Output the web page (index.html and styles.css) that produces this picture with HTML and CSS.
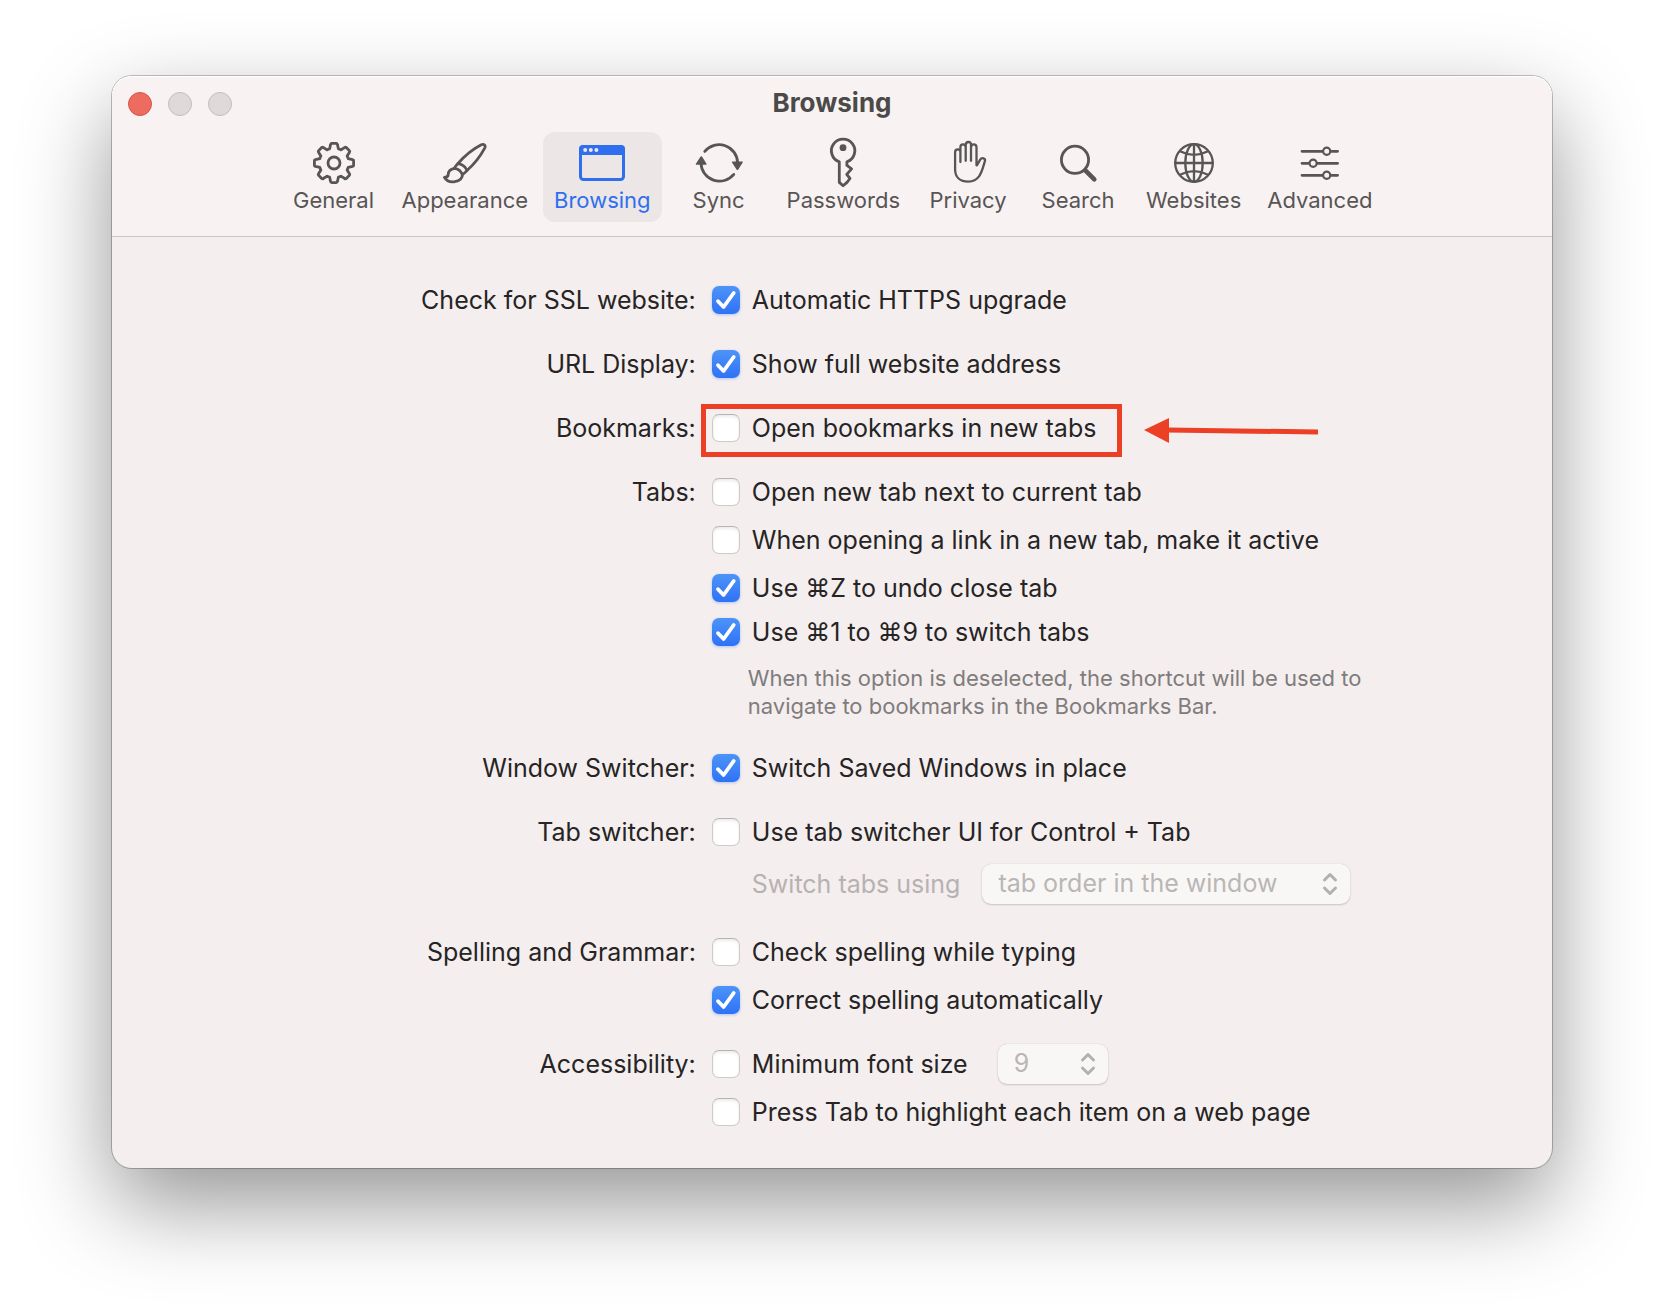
FILE: index.html
```
<!DOCTYPE html>
<html lang="en">
<head>
  <meta charset="UTF-8" />
  <meta name="viewport" content="width=device-width, initial-scale=1.0"/>
  <title>Browsing</title>
  <link rel="stylesheet" href="styles.css">
</head>
<body>
  <main class="window">
    <header class="window-header">
      <div class="titlebar">
        <div class="lights">
          <button class="light close" aria-label="Close"></button>
          <button class="light" aria-label="Minimize" disabled></button>
          <button class="light" aria-label="Zoom" disabled></button>
        </div>
        <h1>Browsing</h1>
      </div>

      <nav class="toolbar">
        <button class="tab">
          <svg class="icon" viewBox="0 0 48 48">
            <g transform="translate(24 24)">
              <path d="M-4.4-14.2 -3.4-18.6Q-3.2-19.6-2.2-19.6H2.2Q3.2-19.6 3.4-18.6L4.4-14.2Q5.6-13.9 6.9-13.1L10.7-15.5Q11.6-16.1 12.3-15.4L15.4-12.3Q16.1-11.6 15.5-10.7L13.1-6.9Q13.9-5.6 14.2-4.4L18.6-3.4Q19.6-3.2 19.6-2.2V2.2Q19.6 3.2 18.6 3.4L14.2 4.4Q13.9 5.6 13.1 6.9L15.5 10.7Q16.1 11.6 15.4 12.3L12.3 15.4Q11.6 16.1 10.7 15.5L6.9 13.1Q5.6 13.9 4.4 14.2L3.4 18.6Q3.2 19.6 2.2 19.6H-2.2Q-3.2 19.6-3.4 18.6L-4.4 14.2Q-5.6 13.9-6.9 13.1L-10.7 15.5Q-11.6 16.1-12.3 15.4L-15.4 12.3Q-16.1 11.6-15.5 10.7L-13.1 6.9Q-13.9 5.6-14.2 4.4L-18.6 3.4Q-19.6 3.2-19.6 2.2V-2.2Q-19.6-3.2-18.6-3.4L-14.2-4.4Q-13.9-5.6-13.1-6.9L-15.5-10.7Q-16.1-11.6-15.4-12.3L-12.3-15.4Q-11.6-16.1-10.7-15.5L-6.9-13.1Q-5.6-13.9-4.4-14.2Z"/>
              <circle r="6"/>
            </g>
          </svg>
          General
        </button>
        <button class="tab">
          <svg class="icon" viewBox="0 0 48 48">
            <path d="M17 24.5C24 16.5 32 10 40.3 5.8C43 4.5 45 6.5 43.7 9.2C39.5 17 33.5 25 26 31.5"/>
            <path d="M17 24.5Q14.5 27 13.3 29.4Q19.5 30.3 21.3 35.6Q24.2 33.8 26 31.5Q24 26 17 24.5Z"/>
            <path d="M13.3 29.4C9 30.2 7.3 33 7.2 35.6C7.1 37.4 5.7 38.2 3.4 38.3C5.5 42 9.5 43.4 13.8 42.7C19 41.8 21.9 38.6 21.3 35.6"/>
          </svg>
          Appearance
        </button>
        <button class="tab active" aria-pressed="true">
          <svg class="icon" viewBox="0 0 48 48">
            <rect x="2.5" y="7.5" width="43" height="33" rx="3" stroke-width="3"/>
            <path class="solid" d="M1 16V10Q1 6 5 6H43Q47 6 47 10V16Z"/>
            <circle class="dot" cx="7.2" cy="11" r="2"/>
            <circle class="dot" cx="12.8" cy="11" r="2"/>
            <circle class="dot" cx="18.4" cy="11" r="2"/>
          </svg>
          Browsing
        </button>
        <button class="tab">
          <svg class="icon" viewBox="0 0 48 48">
            <path d="M9.8 12.4A18.5 18.5 0 0 1 42.6 24M38.8 35.4A18.5 18.5 0 0 1 6 24"/>
            <path class="solid" d="M37.6 22.4H47.2Q48.4 22.4 47.7 23.5L43.3 30.4Q42.4 31.6 41.5 30.4L37 23.5Q36.4 22.4 37.6 22.4ZM1.4 25.8H11Q12.2 25.8 11.5 24.7L7.2 17.8Q6.3 16.6 5.4 17.8L.9 24.7Q.2 25.8 1.4 25.8Z"/>
          </svg>
          Sync
        </button>
        <button class="tab">
          <svg class="icon" viewBox="0 0 48 48">
            <path d="M20.3 22.8A11.7 11.7 0 1 1 27.9 22.8V26.4L32.6 29.8L27.7 35.4L31 39.5L28 43.4L24.1 46.8L20.3 43.4Z"/>
            <circle class="solid" cx="24" cy="8.7" r="3.4"/>
          </svg>
          Passwords
        </button>
        <button class="tab">
          <svg class="icon thin" viewBox="0 0 48 48">
            <path d="M16.4 23V8.3Q16.4 5.4 19 5.4T21.7 8.3V21.8M21.7 21.8V6Q21.7 3 24.4 3T27 6V21.8M27 8.3Q27.2 5.4 29.8 5.4T32.5 8.3V26.3H33L36.2 20.6Q37.4 18.6 39.5 19.3T40.9 22.2C39 28.5 38 33 35.2 37.2C32.5 41 29 42.7 24.3 42.7C16 42.7 11.1 38 11.1 30.5V13.3Q11.1 10.4 13.8 10.4T16.4 13.3"/>
          </svg>
          Privacy
        </button>
        <button class="tab">
          <svg class="icon" viewBox="0 0 48 48">
            <circle cx="21" cy="20.8" r="13.6"/>
            <path d="M31.3 31.3L40.3 40.3" stroke-width="4.6"/>
          </svg>
          Search
        </button>
        <button class="tab">
          <svg class="icon thin" viewBox="0 0 48 48">
            <circle cx="24" cy="24" r="18.8"/>
            <ellipse cx="24" cy="24" rx="8.7" ry="18.8"/>
            <path d="M24 5.2V42.8M5.2 24H42.8M10 12.2Q24 19.4 38 12.2M10 35.8Q24 28.6 38 35.8"/>
          </svg>
          Websites
        </button>
        <button class="tab">
          <svg class="icon" viewBox="0 0 48 48">
            <path d="M6 12.3H26.6M34.8 12.3H41.6M6 24.3H13M21.2 24.3H41.6M6 36.3H26.6M34.8 36.3H41.6"/>
            <circle cx="30.7" cy="12.3" r="3.6" stroke-width="2.2"/>
            <circle cx="17.1" cy="24.3" r="3.6" stroke-width="2.2"/>
            <circle cx="30.7" cy="36.3" r="3.6" stroke-width="2.2"/>
          </svg>
          Advanced
        </button>
      </nav>
    </header>

    <form class="settings">
      <div class="setting" role="group" aria-labelledby="g-ssl">
        <span class="name" id="g-ssl">Check for SSL website:</span>
        <div class="options">
          <label class="option"><input type="checkbox" checked>Automatic HTTPS upgrade</label>
        </div>
      </div>

      <div class="setting" role="group" aria-labelledby="g-url">
        <span class="name" id="g-url">URL Display:</span>
        <div class="options">
          <label class="option"><input type="checkbox" checked>Show full website address</label>
        </div>
      </div>

      <div class="setting" role="group" aria-labelledby="g-bookmarks">
        <span class="name" id="g-bookmarks">Bookmarks:</span>
        <div class="options">
          <div class="marked">
            <label class="option"><input type="checkbox">Open bookmarks in new tabs</label>
            <svg class="arrow" viewBox="0 0 176 26">
              <path d="M24 12L174 14" stroke="#eb4026" stroke-width="5"/>
              <path d="M0 12L25 0V25Z" fill="#eb4026"/>
            </svg>
          </div>
        </div>
      </div>

      <div class="setting" role="group" aria-labelledby="g-tabs">
        <span class="name" id="g-tabs">Tabs:</span>
        <div class="options">
          <label class="option"><input type="checkbox">Open new tab next to current tab</label>
          <label class="option"><input type="checkbox">When opening a link in a new tab, make it active</label>
          <label class="option"><input type="checkbox" checked>Use ⌘Z to undo close tab</label>
          <label class="option close-up"><input type="checkbox" checked aria-describedby="hint">Use ⌘1 to ⌘9 to switch tabs</label>
          <p class="hint" id="hint">When this option is deselected, the shortcut will be used to navigate to bookmarks in the Bookmarks Bar.</p>
        </div>
      </div>

      <div class="setting" role="group" aria-labelledby="g-window">
        <span class="name" id="g-window">Window Switcher:</span>
        <div class="options">
          <label class="option"><input type="checkbox" checked>Switch Saved Windows in place</label>
        </div>
      </div>

      <div class="setting" role="group" aria-labelledby="g-switcher">
        <span class="name" id="g-switcher">Tab switcher:</span>
        <div class="options">
          <label class="option"><input type="checkbox">Use tab switcher UI for Control + Tab</label>
          <div class="sub-option">
            <label for="tab-order">Switch tabs using</label>
            <span class="select">
              <select class="wide" id="tab-order" disabled>
                <option>tab order in the window</option>
              </select>
              <svg class="chevrons" viewBox="0 0 16 24"><path d="M2.5 8L8 2.5L13.5 8M2.5 16L8 21.5L13.5 16"/></svg>
            </span>
          </div>
        </div>
      </div>

      <div class="setting" role="group" aria-labelledby="g-spelling">
        <span class="name" id="g-spelling">Spelling and Grammar:</span>
        <div class="options">
          <label class="option"><input type="checkbox">Check spelling while typing</label>
          <label class="option"><input type="checkbox" checked>Correct spelling automatically</label>
        </div>
      </div>

      <div class="setting" role="group" aria-labelledby="g-access">
        <span class="name" id="g-access">Accessibility:</span>
        <div class="options">
          <div class="with-select">
            <label class="option"><input type="checkbox">Minimum font size</label>
            <span class="select">
              <select class="narrow" aria-label="Font size" disabled>
                <option>9</option>
              </select>
              <svg class="chevrons" viewBox="0 0 16 24"><path d="M2.5 8L8 2.5L13.5 8M2.5 16L8 21.5L13.5 16"/></svg>
            </span>
          </div>
          <label class="option"><input type="checkbox">Press Tab to highlight each item on a web page</label>
        </div>
      </div>
    </form>
  </main>
</body>
</html>
```
FILE: styles.css
```
* {
  box-sizing: border-box;
}

body {
  margin: 0;
  padding: 76px 112px 148px;
  background-color: #fff;
  font-family: Inter, "Liberation Sans", sans-serif;
  font-size: 25px;
  line-height: 28px;
  color: #262424;
}

button, select {
  font-family: inherit;
  border: none;
}

.window {
  border-radius: 20px;
  background-color: #f4eeee;
  box-shadow: 0 0 0 1px rgba(0,0,0,0.24), 0 36px 90px rgba(0,0,0,0.42);
}

/* header */
.window-header {
  padding: 16px 16px 14px;
  border-bottom: 1px solid #cbc6c6;
  border-radius: 20px 20px 0 0;
  background-color: #f8f2f2;
  box-shadow: inset 0 1px 0 #fff;
}

.titlebar {
  display: grid;
  grid-template-columns: 1fr auto 1fr;
  margin-bottom: 16px;
}

.lights {
  display: flex;
  gap: 16px;
}

.light {
  width: 24px;
  height: 24px;
  padding: 0;
  border: 1px solid #c3bebe;
  border-radius: 50%;
  background-color: #dfd9d9;
}

.light.close {
  border-color: #d5564a;
  background-color: #ed6b5f;
}

h1 {
  margin: 0;
  font-size: 26px;
  font-weight: 700;
  line-height: 22px;
  color: #4b4949;
}

.toolbar {
  display: flex;
  justify-content: center;
  gap: 4px;
}

.tab {
  display: flex;
  flex-direction: column;
  align-items: center;
  min-width: 106px;
  padding: 7px 11px 9px;
  border-radius: 12px;
  background: none;
  font-size: 22px;
  line-height: 26px;
  color: #585555;
}

.tab.active {
  background-color: #ece6e6;
  color: #2f6fef;
}

.icon {
  width: 48px;
  height: 48px;
  overflow: visible;
  fill: none;
  stroke: currentColor;
  stroke-width: 2.8;
  stroke-linecap: round;
  stroke-linejoin: round;
}

.icon.thin {
  stroke-width: 2.3;
}

.icon .solid {
  fill: currentColor;
  stroke: none;
}

.icon .dot {
  fill: #ece6e6;
  stroke: none;
}

/* settings */
.settings {
  display: flex;
  flex-direction: column;
  gap: 36px;
  padding: 49px 0 42px;
}

.setting {
  display: grid;
  grid-template-columns: 41fr 59fr;
  column-gap: 16px;
}

.name {
  text-align: right;
}

.options {
  display: flex;
  flex-direction: column;
  align-items: flex-start;
  gap: 20px;
}

.option {
  display: flex;
  align-items: center;
  gap: 12px;
}

.option.close-up {
  margin-top: -4px;
}

input[type="checkbox"] {
  appearance: none;
  flex: none;
  width: 28px;
  height: 28px;
  margin: 0;
  border: 1px solid #cfcaca;
  border-top-color: #b9b5b5;
  border-radius: 7px;
  background-color: #fff;
  box-shadow: inset 0 2px 3px rgba(0,0,0,0.08);
}

input[type="checkbox"]:checked {
  border: none;
  background: url("data:image/svg+xml,%3Csvg xmlns='http://www.w3.org/2000/svg' viewBox='0 0 28 28'%3E%3Cpath d='M6 15.2L11.6 21L21.7 7' fill='none' stroke='white' stroke-width='3.8' stroke-linecap='round' stroke-linejoin='round'/%3E%3C/svg%3E"), linear-gradient(#4c94f8, #2f72f6);
  box-shadow: 0 1px 3px rgba(47,114,246,0.35);
}

.hint {
  max-width: 680px;
  margin: -2px 0;
  padding-left: 36px;
  font-size: 22px;
  color: #807c7c;
}

.sub-option, .with-select {
  display: flex;
  align-items: center;
  height: 28px;
}

.sub-option {
  gap: 22px;
  margin: 4px 0;
  padding-left: 40px;
  color: #b7b2b2;
}

.with-select {
  gap: 30px;
}

.select {
  position: relative;
}

select {
  appearance: none;
  display: block;
  height: 40px;
  padding: 0 16px 2px;
  border-radius: 9px;
  background-color: #f9f7f6;
  box-shadow: 0 0 1px rgba(0,0,0,0.2), 0 1px 2px rgba(0,0,0,0.16);
  font-size: 25px;
}

select:disabled {
  opacity: 1;
  color: #b9b6b5;
}

.wide {
  width: 368px;
}

.narrow {
  width: 110px;
}

.chevrons {
  position: absolute;
  top: 8px;
  right: 12px;
  width: 16px;
  height: 24px;
  fill: none;
  stroke: #b3b0af;
  stroke-width: 3;
  stroke-linecap: round;
  stroke-linejoin: round;
  pointer-events: none;
}

/* red frame and arrow over the bookmarks option */
.marked {
  position: relative;
}

.marked::before {
  content: "";
  position: absolute;
  inset: -10px -26px -15px -11px;
  border: 5px solid #eb4026;
  pointer-events: none;
}

.arrow {
  position: absolute;
  top: 4px;
  left: calc(100% + 48px);
  width: 176px;
  height: 26px;
}
```
